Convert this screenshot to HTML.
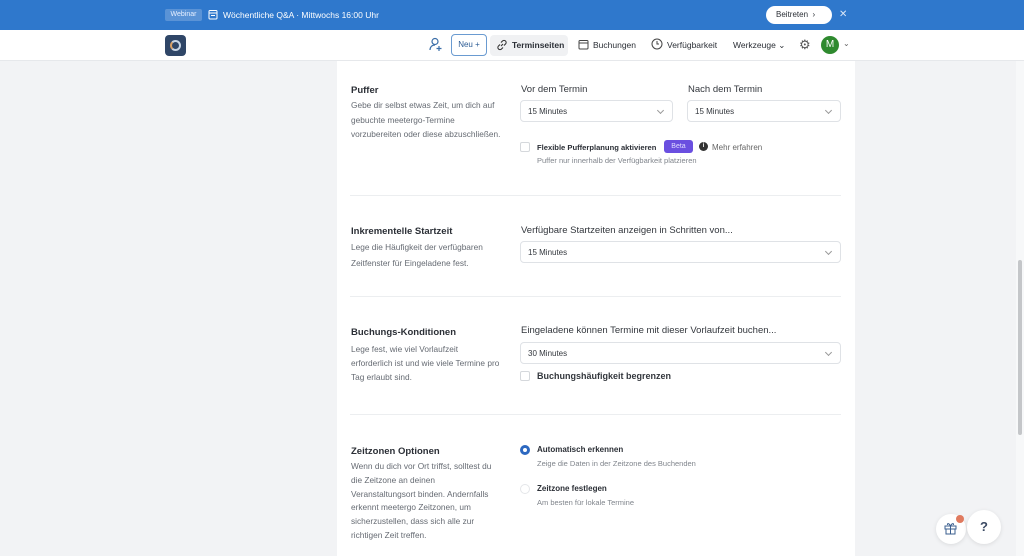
<!DOCTYPE html>
<html><head><meta charset="utf-8"><style>
*{margin:0;padding:0;box-sizing:border-box}
html,body{overflow:hidden}
body{width:1024px;height:556px;background:#f2f3f5;font-family:"Liberation Sans",sans-serif;color:#2b2f36;position:relative}
.a{position:absolute}
.top{left:0;top:0;width:1024px;height:30px;background:#2f78cc}
.nav{left:0;top:30px;width:1024px;height:31px;background:#fff;border-bottom:1px solid #e6e8eb}
.panel{left:337px;top:61px;width:518px;height:495px;background:#fff}
h3{position:absolute;font-size:9.5px;font-weight:bold;color:#2b2f36}
.d{position:absolute;font-size:8.3px;line-height:16px;color:#666b73;white-space:nowrap}
.l{position:absolute;font-size:9.5px;color:#33373d}
.sel{position:absolute;height:22px;border:1px solid #dfe2e6;border-radius:4px;font-size:8px;color:#33373d;padding:6px 7px;background:#fff}
.sel:after{content:"";position:absolute;right:9px;top:7px;width:4px;height:4px;border-right:1px solid #999;border-bottom:1px solid #999;transform:rotate(45deg)}
.hr{position:absolute;left:350px;width:491px;height:1px;background:#eceef0}
.cb{position:absolute;width:10px;height:10px;border:1px solid #d5d8dc;border-radius:2px;background:#fff}
.s{position:absolute;font-size:7.5px;color:#80858c}
.b{position:absolute;font-size:8px;font-weight:bold;color:#2b2f36}
.n{position:absolute;font-size:8.5px;color:#2b2f36;top:40px}
</style></head><body>
<div class="a top"></div>
<div class="a" style="left:165px;top:9px;width:37px;height:12px;background:#5a93d6;border-radius:2px;font-size:7px;color:#e6efff;text-align:center;line-height:12px">Webinar</div>
<svg class="a" style="left:208px;top:9px" width="10" height="11" viewBox="0 0 10 11"><rect x="1" y="1.5" width="8" height="8.5" rx="1" fill="none" stroke="#fff" stroke-width="1"/><line x1="1" y1="4" x2="9" y2="4" stroke="#fff"/><line x1="3" y1="6.5" x2="7" y2="6.5" stroke="#fff"/></svg>
<div class="a" style="left:223px;top:10px;font-size:8.5px;color:#fff">Wöchentliche Q&amp;A · Mittwochs 16:00 Uhr</div>
<div class="a" style="left:766px;top:6px;width:66px;height:18px;background:#fff;border-radius:9px;font-size:8px;color:#2b2f36;line-height:18px;padding-left:10px">Beitreten &nbsp;›</div>
<div class="a" style="left:839px;top:9px;font-size:10px;color:#dbe7f7">✕</div>
<div class="a nav"></div>
<div class="a" style="left:165px;top:35px;width:21px;height:21px;background:#2f4667;border-radius:4px"></div>
<div class="a" style="left:170px;top:40px;width:11px;height:11px;border:2px solid #c9d6e6;border-left-color:#d8a066;border-radius:50%"></div>
<svg class="a" style="left:429px;top:37px" width="14" height="15" viewBox="0 0 14 15"><circle cx="6" cy="4.5" r="3" fill="none" stroke="#3b6ea8" stroke-width="1.2"/><path d="M1 13c0-3 2-5 5-5" fill="none" stroke="#3b6ea8" stroke-width="1.2"/><path d="M10 9v5M7.5 11.5h5" stroke="#3b6ea8" stroke-width="1.2"/></svg>
<div class="a" style="left:451px;top:34px;width:36px;height:22px;border:1px solid #6a9bd1;border-radius:4px;font-size:8px;color:#2b5b94;line-height:20px;text-align:center">Neu +</div>
<div class="a" style="left:490px;top:35px;width:78px;height:21px;background:#f0f1f3;border-radius:4px"></div>
<svg class="a" style="left:496px;top:39px" width="12" height="12" viewBox="0 0 12 12"><path d="M5 7l2-2M4 5.5L2.5 7a2 2 0 003 3L7 8.5M8 6.5L9.5 5a2 2 0 00-3-3L5 3.5" fill="none" stroke="#333" stroke-width="1.1"/></svg>
<div class="n" style="left:512px;font-weight:bold">Terminseiten</div>
<svg class="a" style="left:578px;top:39px" width="11" height="11" viewBox="0 0 11 11"><rect x="1" y="1.5" width="9" height="8.5" rx="1" fill="none" stroke="#444"/><line x1="1" y1="4" x2="10" y2="4" stroke="#444"/></svg>
<div class="n" style="left:593px">Buchungen</div>
<svg class="a" style="left:651px;top:38px" width="12" height="12" viewBox="0 0 12 12"><circle cx="6" cy="6" r="5" fill="none" stroke="#444"/><path d="M6 3v3h2" fill="none" stroke="#444"/></svg>
<div class="n" style="left:667px">Verfügbarkeit</div>
<div class="n" style="left:733px">Werkzeuge ⌄</div>
<div class="a" style="left:799px;top:37px;font-size:13px;color:#555">⚙</div>
<div class="a" style="left:821px;top:36px;width:18px;height:18px;border-radius:50%;background:#2f8a2f;color:#fff;font-size:10px;text-align:center;line-height:18px">M</div>
<div class="a" style="left:843px;top:39px;font-size:8px;color:#666">⌄</div>
<div class="a panel"></div>

<h3 style="left:351px;top:85px">Puffer</h3>
<div class="d" style="left:351px;top:98px;line-height:14.5px">Gebe dir selbst etwas Zeit, um dich auf<br>gebuchte meetergo-Termine<br>vorzubereiten oder diese abzuschließen.</div>
<div class="l" style="left:521px;top:84px">Vor dem Termin</div>
<div class="l" style="left:688px;top:84px">Nach dem Termin</div>
<div class="sel" style="left:520px;top:100px;width:153px">15 Minutes</div>
<div class="sel" style="left:687px;top:100px;width:154px">15 Minutes</div>
<div class="cb" style="left:520px;top:142px"></div>
<div class="b" style="left:537px;top:143px;font-size:7.6px">Flexible Pufferplanung aktivieren</div>
<div class="a" style="left:664px;top:140px;width:29px;height:13px;background:#6a4fe0;border-radius:3px;font-size:7px;color:#e0dbff;text-align:center;line-height:13px">Beta</div>
<div class="a" style="left:699px;top:142px;width:9px;height:9px;border-radius:50%;background:#333;color:#fff;font-size:6px;text-align:center;line-height:9px;font-weight:bold">i</div>
<div class="s" style="left:712px;top:143px;font-size:8px;color:#666">Mehr erfahren</div>
<div class="s" style="left:537px;top:156px">Puffer nur innerhalb der Verfügbarkeit platzieren</div>
<div class="hr" style="top:195px"></div>

<h3 style="left:351px;top:226px">Inkrementelle Startzeit</h3>
<div class="d" style="left:351px;top:239px">Lege die Häufigkeit der verfügbaren<br>Zeitfenster für Eingeladene fest.</div>
<div class="l" style="left:521px;top:225px">Verfügbare Startzeiten anzeigen in Schritten von...</div>
<div class="sel" style="left:520px;top:241px;width:321px">15 Minutes</div>
<div class="hr" style="top:296px"></div>

<h3 style="left:351px;top:327px">Buchungs-Konditionen</h3>
<div class="d" style="left:351px;top:342px;line-height:14px">Lege fest, wie viel Vorlaufzeit<br>erforderlich ist und wie viele Termine pro<br>Tag erlaubt sind.</div>
<div class="l" style="left:521px;top:325px">Eingeladene können Termine mit dieser Vorlaufzeit buchen...</div>
<div class="sel" style="left:520px;top:342px;width:321px">30 Minutes</div>
<div class="cb" style="left:520px;top:371px"></div>
<div class="l" style="left:537px;top:371px;font-weight:bold;font-size:9px">Buchungshäufigkeit begrenzen</div>
<div class="hr" style="top:414px"></div>

<h3 style="left:351px;top:446px">Zeitzonen Optionen</h3>
<div class="d" style="left:351px;top:460px;line-height:13.8px">Wenn du dich vor Ort triffst, solltest du<br>die Zeitzone an deinen<br>Veranstaltungsort binden. Andernfalls<br>erkennt meetergo Zeitzonen, um<br>sicherzustellen, dass sich alle zur<br>richtigen Zeit treffen.</div>
<div class="a" style="left:520px;top:445px;width:10px;height:10px;border-radius:50%;border:3px solid #2c68c0"></div>
<div class="b" style="left:537px;top:445px">Automatisch erkennen</div>
<div class="s" style="left:537px;top:459px">Zeige die Daten in der Zeitzone des Buchenden</div>
<div class="a" style="left:520px;top:484px;width:10px;height:10px;border-radius:50%;border:1px solid #e4e6e9"></div>
<div class="b" style="left:537px;top:484px">Zeitzone festlegen</div>
<div class="s" style="left:537px;top:498px">Am besten für lokale Termine</div>

<div class="a" style="left:1016px;top:61px;width:8px;height:495px;background:#f7f8f9"></div>
<div class="a" style="left:1018px;top:260px;width:4px;height:175px;background:#c4c6c9;border-radius:2px"></div>
<div class="a" style="left:936px;top:514px;width:30px;height:30px;border-radius:50%;background:#fff;box-shadow:0 1px 4px rgba(0,0,0,.1)"></div>
<svg class="a" style="left:943px;top:521px" width="15" height="15" viewBox="0 0 15 15"><rect x="2" y="5" width="11" height="3" fill="none" stroke="#3b5f8f"/><rect x="3" y="8" width="9" height="5" fill="none" stroke="#3b5f8f"/><line x1="7.5" y1="5" x2="7.5" y2="13" stroke="#3b5f8f"/><path d="M7.5 5C6 2 4 2 4.5 4M7.5 5C9 2 11 2 10.5 4" fill="none" stroke="#3b5f8f"/></svg>
<div class="a" style="left:956px;top:515px;width:8px;height:8px;border-radius:50%;background:#e07a5f"></div>
<div class="a" style="left:967px;top:510px;width:34px;height:34px;border-radius:50%;background:#fff;box-shadow:0 1px 4px rgba(0,0,0,.1);font-size:13px;font-weight:bold;color:#3b4a63;text-align:center;line-height:34px">?</div>
</body></html>
